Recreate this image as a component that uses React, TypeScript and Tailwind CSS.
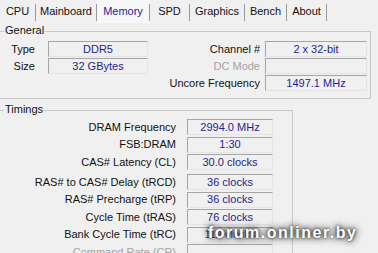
import React from "react"

const tabs = [
  { name: "CPU", w: "w-[36px]" },
  { name: "Mainboard", w: "w-[61px]" },
  { name: "Memory", w: "w-[53px]", active: true },
  { name: "SPD", w: "w-[40px]" },
  { name: "Graphics", w: "w-[55px]" },
  { name: "Bench", w: "w-[42px]" },
  { name: "About", w: "w-[40px]" },
]

const timingsTop = [
  { label: "DRAM Frequency", value: "2994.0 MHz" },
  { label: "FSB:DRAM", value: "1:30" },
  { label: "CAS# Latency (CL)", value: "30.0 clocks" },
]

const timingsBottom = [
  { label: "RAS# to CAS# Delay (tRCD)", value: "36 clocks" },
  { label: "RAS# Precharge (tRP)", value: "36 clocks" },
  { label: "Cycle Time (tRAS)", value: "76 clocks" },
  { label: "Bank Cycle Time (tRC)", value: "112 clocks" },
  { label: "Command Rate (CR)", value: "", disabled: true },
]

function Field({ value, w }: { value: string; w: string }) {
  return (
    <div
      className={`${w} h-[16px] flex items-center justify-center border border-t-[#a5a5a5] border-l-[#a5a5a5] border-b-[#e4e4e4] border-r-[#e4e4e4] bg-[#f0f0f0] text-[#1f1f8f] leading-none`}
    >
      {value}
    </div>
  )
}

function TimingRow({ label, value, disabled }: { label: string; value: string; disabled?: boolean }) {
  return (
    <div className="flex items-center h-[16px]">
      <span className={`w-[175px] text-right ${disabled ? "text-[#a3a3a3]" : "text-[#111]"}`}>{label}</span>
      <div className="ml-[11px]">
        <Field value={value} w="w-[86px]" />
      </div>
    </div>
  )
}

export default function App() {
  return (
    <div className="relative w-[378px] h-[253px] overflow-hidden bg-[#f0f0f0] text-[11px] font-['Liberation_Sans',Arial,sans-serif] text-[#111]">
      {/* Tabs */}
      <div className="flex h-[23px] items-start">
        {tabs.map((t) => (
          <div
            key={t.name}
            className={`${t.w} h-[23px] flex items-center justify-center ${t.active ? "bg-[#f7f7f7] text-[#24249a]" : ""}`}
          >
            <span className="flex-1 text-center">{t.name}</span>
            <span className="w-px h-[17px] bg-[#9a9a9a] mt-[2px]" />
          </div>
        ))}
      </div>

      {/* General */}
      <div className="relative mt-[8px] ml-[-2px] w-[373px] h-[68px] border border-[#c9c9c9]">
        <span className="absolute left-[5px] top-[-8px] px-[1px] bg-[#f0f0f0] leading-[13px]">General</span>
        <div className="flex pt-[9px]">
          <div className="flex flex-col gap-[1px]">
            <div className="flex items-center h-[16px]">
              <span className="w-[36px] text-right">Type</span>
              <div className="ml-[13px]">
                <Field value="DDR5" w="w-[100px]" />
              </div>
            </div>
            <div className="flex items-center h-[16px]">
              <span className="w-[36px] text-right">Size</span>
              <div className="ml-[13px]">
                <Field value="32 GBytes" w="w-[100px]" />
              </div>
            </div>
          </div>
          <div className="flex flex-col gap-[1px] ml-[2px]">
            <div className="flex items-center h-[16px]">
              <span className="w-[110px] text-right">Channel #</span>
              <div className="ml-[5px]">
                <Field value="2 x 32-bit" w="w-[102px]" />
              </div>
            </div>
            <div className="flex items-center h-[16px]">
              <span className="w-[110px] text-right text-[#a3a3a3]">DC Mode</span>
              <div className="ml-[5px]">
                <Field value="" w="w-[102px]" />
              </div>
            </div>
            <div className="flex items-center h-[16px] ml-[-80px]">
              <span className="w-[190px] text-right">Uncore Frequency</span>
              <div className="ml-[5px]">
                <Field value="1497.1 MHz" w="w-[102px]" />
              </div>
            </div>
          </div>
        </div>
      </div>

      {/* Timings */}
      <div className="relative mt-[11px] ml-[-2px] w-[295px] h-[200px] border border-[#c9c9c9]">
        <span className="absolute left-[5px] top-[-8px] px-[1px] bg-[#f0f0f0] leading-[13px]">Timings</span>
        <div className="pt-[8px] flex flex-col gap-[1.5px] ml-[2px]">
          {timingsTop.map((r) => (
            <TimingRow key={r.label} {...r} />
          ))}
        </div>
        <div className="mt-[4px] flex flex-col gap-[1.5px] ml-[2px]">
          {timingsBottom.map((r) => (
            <TimingRow key={r.label} {...r} />
          ))}
        </div>
      </div>

      {/* watermark */}
      <span className="absolute left-[208px] top-[221px] text-[16px] font-bold tracking-[1.5px] text-white [text-shadow:0_0_3px_#222,0_0_6px_#444,0_0_8px_#555]">
        forum.onliner.by
      </span>
    </div>
  )
}
